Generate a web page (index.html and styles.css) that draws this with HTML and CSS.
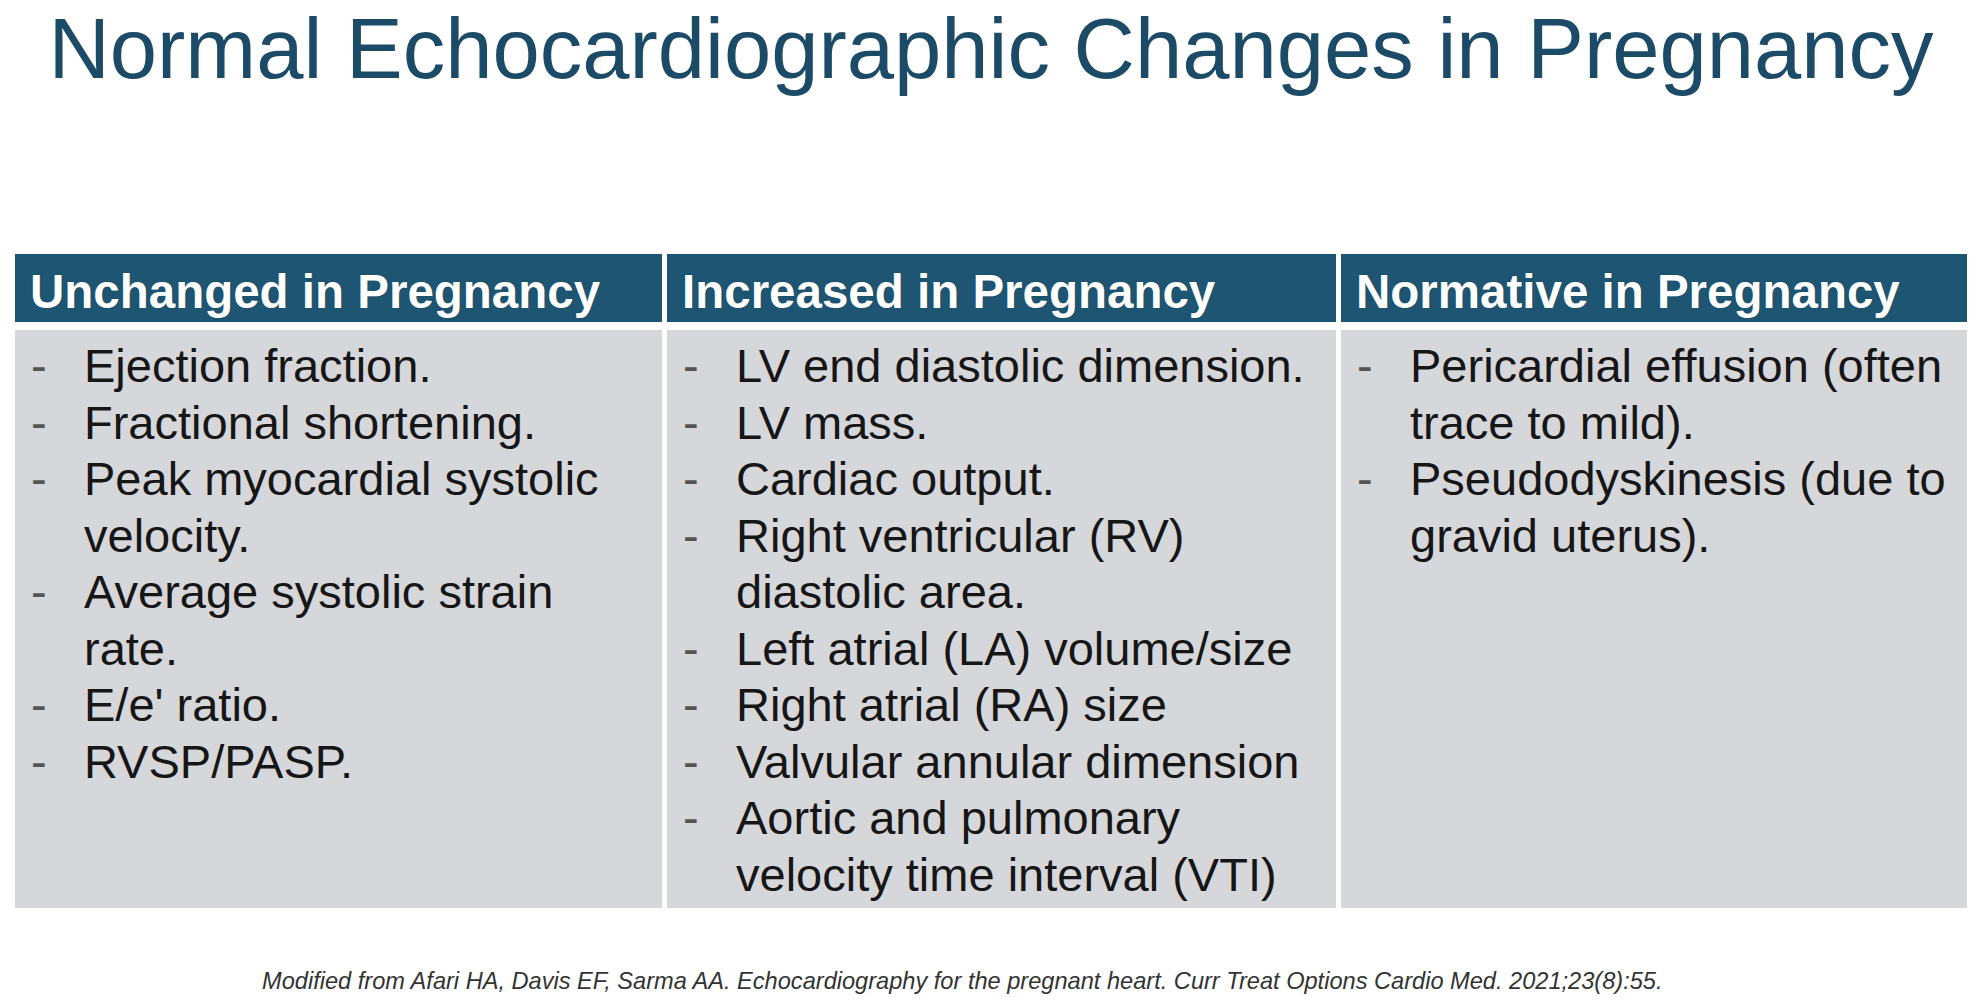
FILE: index.html
```html
<!DOCTYPE html>
<html lang="en">
<head>
<meta charset="utf-8">
<title>Normal Echocardiographic Changes in Pregnancy</title>
<link rel="stylesheet" href="styles.css">
</head>
<body>
<div class="slide">
  <h1 class="title">Normal Echocardiographic Changes in Pregnancy</h1>
  <div class="table">
    <div class="head">Unchanged in Pregnancy</div>
    <div class="head">Increased in Pregnancy</div>
    <div class="head">Normative in Pregnancy</div>
    <ul class="cell">
      <li><span class="dash">-</span><span>Ejection fraction.</span></li>
      <li><span class="dash">-</span><span>Fractional shortening.</span></li>
      <li><span class="dash">-</span><span>Peak myocardial systolic velocity.</span></li>
      <li><span class="dash">-</span><span>Average systolic strain rate.</span></li>
      <li><span class="dash">-</span><span>E/e' ratio.</span></li>
      <li><span class="dash">-</span><span>RVSP/PASP.</span></li>
    </ul>
    <ul class="cell">
      <li><span class="dash">-</span><span>LV end diastolic dimension.</span></li>
      <li><span class="dash">-</span><span>LV mass.</span></li>
      <li><span class="dash">-</span><span>Cardiac output.</span></li>
      <li><span class="dash">-</span><span>Right ventricular (RV) diastolic area.</span></li>
      <li><span class="dash">-</span><span>Left atrial (LA) volume/size</span></li>
      <li><span class="dash">-</span><span>Right atrial (RA) size</span></li>
      <li><span class="dash">-</span><span>Valvular annular dimension</span></li>
      <li><span class="dash">-</span><span>Aortic and pulmonary velocity time interval (VTI)</span></li>
    </ul>
    <ul class="cell">
      <li><span class="dash">-</span><span>Pericardial effusion (often trace to mild).</span></li>
      <li><span class="dash">-</span><span>Pseudodyskinesis (due to gravid uterus).</span></li>
    </ul>
  </div>
  <p class="source">Modified from Afari HA, Davis EF, Sarma AA. Echocardiography for the pregnant heart. Curr Treat Options Cardio Med. 2021;23(8):55.</p>
</div>
</body>
</html>
```

FILE: styles.css
```css
html, body {
  margin: 0;
  padding: 0;
  background: #ffffff;
}

.slide {
  width: 1982px;
  height: 1008px;
  overflow: hidden;
  font-family: "Liberation Sans", Arial, sans-serif;
}

.title {
  margin: 0;
  padding-top: 6px;
  height: 85px;
  font-size: 85px;
  line-height: 85px;
  font-weight: normal;
  text-align: center;
  color: #1b4b67;
  white-space: nowrap;
}

.table {
  margin: 163px 0 0 15px;
  width: 1952px;
  display: grid;
  grid-template-columns: 647px 669px 626px;
  grid-template-rows: 68px 578px;
  column-gap: 5px;
  row-gap: 8px;
}

.head {
  background: #1d5572;
  color: #ffffff;
  font-weight: bold;
  font-size: 47.5px;
  line-height: 60px;
  padding: 8px 0 0 15px;
  box-sizing: border-box;
  white-space: nowrap;
  text-shadow: 0 0 1px rgba(10, 40, 60, 0.6);
}

.cell {
  list-style: none;
  margin: 0;
  padding: 8px 10px 0 16px;
  background: #d6d7da;
  color: #161616;
  font-size: 47px;
  line-height: 56.5px;
}

.cell li {
  display: grid;
  grid-template-columns: 53px 1fr;
}

.dash {
  color: #555555;
}

.source {
  margin: 60px 0 0 262px;
  font-size: 23.6px;
  line-height: 26px;
  font-style: italic;
  color: #333333;
  white-space: nowrap;
}
```
